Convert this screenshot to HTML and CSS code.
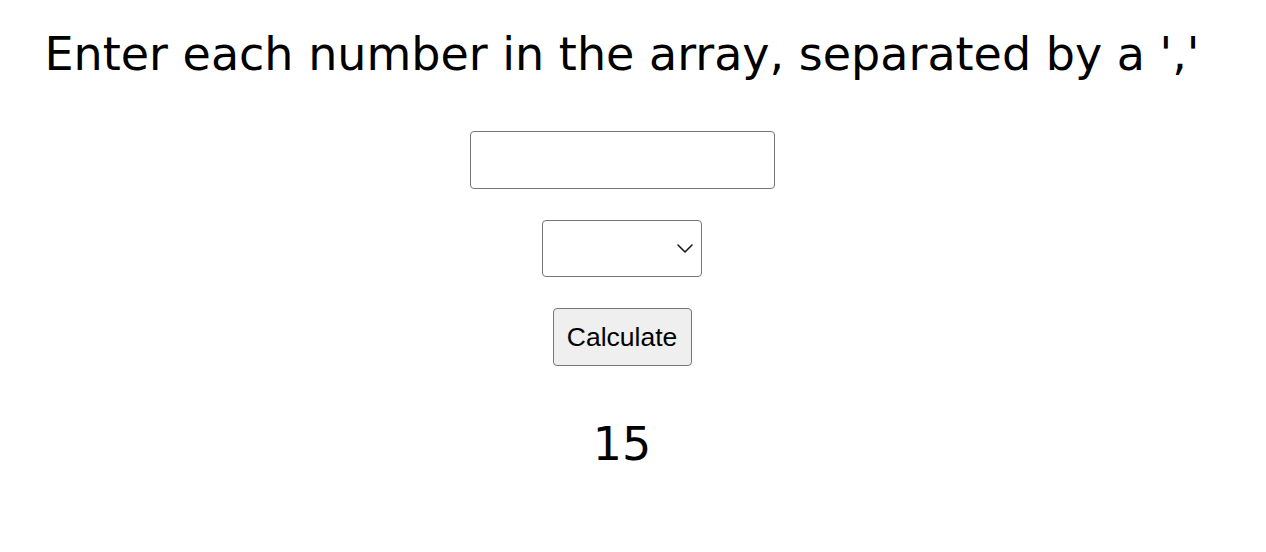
FILE: index.html
```html
<!DOCTYPE html>
<html lang="en">
<head>
<meta charset="utf-8">
<title>Array Calculator</title>
<link rel="stylesheet" href="styles.css">
</head>
<body>
<main class="app">
  <h1 class="title">Enter each number in the array, separated by a ','</h1>
  <div class="controls">
    <input class="numbers" type="text">
    <div class="select-wrap">
      <select class="operation"></select>
      <svg class="chevron" width="16" height="9" viewBox="0 0 16 9" aria-hidden="true">
        <path d="M1 1 L8 8 L15 1" fill="none" stroke="#1a1a1a" stroke-width="1.6" stroke-linecap="round" stroke-linejoin="round"/>
      </svg>
    </div>
    <button class="calc" type="button">Calculate</button>
  </div>
  <p class="result">15</p>
</main>
</body>
</html>
```
FILE: styles.css
```css
html, body {
  margin: 0;
  padding: 0;
  background: #ffffff;
}

.app {
  width: 1244px;
  display: flex;
  flex-direction: column;
  align-items: center;
  font-family: "DejaVu Sans", sans-serif;
  color: #000;
}

.title {
  margin: 27px 0 0;
  font-size: 46px;
  line-height: 54px;
  font-weight: 400;
  white-space: nowrap;
}

.controls {
  margin-top: 50px;
  display: flex;
  flex-direction: column;
  align-items: center;
  gap: 31px;
}

.numbers {
  box-sizing: border-box;
  width: 305px;
  height: 58px;
  border: 1px solid #767676;
  border-radius: 4px;
  padding: 0 8px;
  font-size: 20px;
  background: #fff;
}

.select-wrap {
  position: relative;
  display: flex;
}

.operation {
  box-sizing: border-box;
  width: 160px;
  height: 57px;
  border: 1px solid #767676;
  border-radius: 4px;
  background: #fff;
  font-size: 20px;
  appearance: none;
  -webkit-appearance: none;
  margin: 0;
}

.chevron {
  position: absolute;
  right: 9px;
  top: 24px;
  pointer-events: none;
}

.calc {
  box-sizing: border-box;
  width: 139px;
  height: 58px;
  padding: 0;
  border: 1px solid #767676;
  border-radius: 4px;
  background: #efefef;
  color: #000;
  font-family: "Liberation Sans", Arial, sans-serif;
  font-size: 26.5px;
}

.result {
  margin: 51px 0 0;
  font-size: 46px;
  line-height: 54px;
}
```
